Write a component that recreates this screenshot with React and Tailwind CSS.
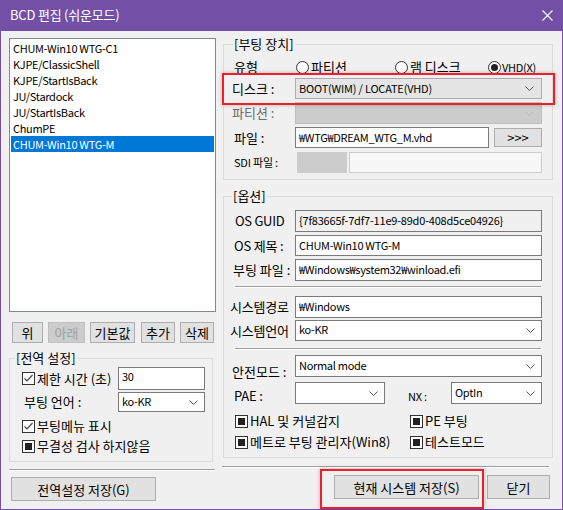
import React from 'react';

const entries = [
  'CHUM-Win10 WTG-C1',
  'KJPE/ClassicShell',
  'KJPE/StartIsBack',
  'JU/Stardock',
  'JU/StartIsBack',
  'ChumPE',
  'CHUM-Win10 WTG-M',
];

function Chevron({ color = '#555' }) {
  return (
    <svg width="9" height="5" viewBox="0 0 9 5" className="shrink-0">
      <polyline points="0.5,0.5 4.5,4.5 8.5,0.5" fill="none" stroke={color} strokeWidth="1" />
    </svg>
  );
}

function Btn({ children, className = '', disabled }) {
  return (
    <div
      className={`flex items-center justify-center border text-[13px] leading-none ${
        disabled ? 'border-[#bfbfbf] bg-[#cccccc] text-[#a0a0a0]' : 'border-[#adadad] bg-[#e1e1e1] text-black'
      } ${className}`}
    >
      {children}
    </div>
  );
}

function Combo({ value, className = '' }) {
  return (
    <div className={`flex items-center justify-between bg-white border border-[#7a7a7a] pl-[3px] pr-[6px] text-[11px] tracking-[-0.3px] ${className}`}>
      <span className="-mt-[2px]">{value}</span>
      <Chevron />
    </div>
  );
}

function Field({ value, className = '' }) {
  return (
    <div className={`flex items-center bg-white border border-[#7a7a7a] pl-[3px] text-[11px] tracking-[-0.3px] ${className}`}>
      <span className="-mt-[1px]">{value}</span>
    </div>
  );
}

function Check({ state }) {
  return (
    <span className="w-[13px] h-[13px] shrink-0 border border-[#333333] bg-white flex items-center justify-center">
      {state === 'checked' && (
        <svg width="11" height="11" viewBox="0 0 11 11">
          <polyline points="1.5,5.5 4,8 9.5,2" fill="none" stroke="#444" strokeWidth="1.2" />
        </svg>
      )}
      {state === 'mixed' && <span className="w-[7px] h-[7px] bg-[#222222]" />}
    </span>
  );
}

function Radio({ on }) {
  return (
    <span className="w-[13px] h-[13px] shrink-0 rounded-full border border-[#333333] bg-white flex items-center justify-center">
      {on && <span className="w-[7px] h-[7px] rounded-full bg-[#222222]" />}
    </span>
  );
}

function Separator({ className = '' }) {
  return <div className={`h-[2px] border-t border-[#a0a0a0] border-b border-b-white ${className}`} />;
}

function Label({ children, className = '' }) {
  return <span className={`w-[61px] shrink-0 text-[13px] whitespace-nowrap ${className}`}>{children}</span>;
}

export default function App() {
  return (
    <div className="relative w-[563px] h-[510px] bg-[#7350a6] flex flex-col px-px pb-px font-['Noto_Sans_CJK_KR','Noto_Sans',sans-serif] text-black">
      {/* title bar */}
      <div className="h-[31px] shrink-0 flex items-center justify-between pl-[9px] pr-[9px] text-white">
        <span className="text-[13px] tracking-[-0.2px] -mt-[1px]">BCD 편집 (쉬운모드)</span>
        <svg width="11" height="11" viewBox="0 0 11 11">
          <path d="M0.5 0.5 L10.5 10.5 M10.5 0.5 L0.5 10.5" stroke="#fff" strokeWidth="1.1" />
        </svg>
      </div>

      <div className="flex-1 bg-[#f0f0f0] flex">
        {/* left column */}
        <div className="w-[208px] ml-[8px] flex flex-col">
          <div className="mt-[7px] h-[274px] w-[207px] bg-white border border-[#828790] p-px pt-[1px] flex flex-col text-[11px] tracking-[-0.3px]">
            {entries.map((e, i) => (
              <div
                key={e}
                className={`h-[16px] shrink-0 pl-[2px] leading-[16px] whitespace-nowrap ${
                  i === entries.length - 1 ? 'bg-[#0078d7] text-white' : ''
                }`}
              >
                {e}
              </div>
            ))}
          </div>

          <div className="mt-[10px] h-[21px] flex pl-[3px]">
            <Btn className="w-[31px]">위</Btn>
            <Btn className="w-[37px] ml-[5px]" disabled>아래</Btn>
            <Btn className="w-[45px] ml-[5px]">기본값</Btn>
            <Btn className="w-[34px] ml-[6px]">추가</Btn>
            <Btn className="w-[34px] ml-[5px]">삭제</Btn>
          </div>

          <fieldset className="mt-[7px] w-[204px] border border-[#dcdcdc]">
            <legend className="ml-[5px] px-[1px] text-[13px] leading-[16px]">[전역 설정]</legend>
            <div className="pl-[12px] pb-[7px] flex flex-col">
              <div className="mt-[1px] h-[23px] flex items-center">
                <div className="w-[96px] flex items-center gap-[2px] text-[13px] whitespace-nowrap">
                  <Check state="checked" />
                  <span>제한 시간 (초)</span>
                </div>
                <Field value="30" className="w-[87px] h-[23px] items-start pt-[1px]" />
              </div>
              <div className="mt-[2px] h-[20px] flex items-center">
                <span className="w-[96px] text-[13px] pl-[2px]">부팅 언어 :</span>
                <Combo value="ko-KR" className="w-[87px] h-[20px]" />
              </div>
              <div className="mt-[6px] h-[16px] flex items-center gap-[2px] text-[13px]">
                <Check state="checked" />
                <span>부팅메뉴 표시</span>
              </div>
              <div className="mt-[4px] h-[16px] flex items-center gap-[2px] text-[13px]">
                <Check state="mixed" />
                <span>무결성 검사 하지않음</span>
              </div>
            </div>
          </fieldset>

          <Separator className="mt-[7px] w-[206px]" />
          <Btn className="mt-[6px] ml-[2px] w-[145px] h-[24px]">전역설정 저장(G)</Btn>
        </div>

        {/* right column */}
        <div className="w-[330px] ml-[6px] flex flex-col">
          <fieldset className="mt-[5px] w-[330px] border border-[#dcdcdc]">
            <legend className="ml-[9px] px-[1px] text-[13px] leading-[16px]">[부팅 장치]</legend>
            <div className="px-[10px] pb-[6px] flex flex-col">
              <div className="mt-[5px] h-[20px] flex items-center">
                <Label>유형</Label>
                <div className="w-[99px] ml-[1px] flex items-center gap-[2px] text-[13px]">
                  <Radio />
                  <span>파티션</span>
                </div>
                <div className="w-[93px] flex items-center gap-[2px] text-[13px]">
                  <Radio />
                  <span>램 디스크</span>
                </div>
                <div className="flex items-center gap-[1px] text-[11px] tracking-[-0.3px]">
                  <Radio on />
                  <span>VHD(X)</span>
                </div>
              </div>
              <div className="mt-[1px] h-[21px] flex items-center">
                <Label className="-ml-[2px] mr-[2px]">디스크 :</Label>
                <div className="w-[247px] h-[21px] flex items-center justify-between bg-[#e5e5e5] border border-[#adadad] pl-[3px] pr-[7px] text-[11px] tracking-[-0.2px]">
                  <span className="-mt-[1px]">BOOT(WIM) / LOCATE(VHD)</span>
                  <Chevron />
                </div>
              </div>
              <div className="mt-[3px] h-[22px] flex items-center">
                <Label className="-ml-[2px] mr-[2px] text-[#6d6d6d]">파티션 :</Label>
                <div className="w-[247px] h-[22px] flex items-center justify-end bg-[#cccccc] border border-[#bfbfbf] pr-[7px]">
                  <Chevron color="#bfbfbf" />
                </div>
              </div>
              <div className="mt-[3px] h-[21px] flex items-center">
                <Label>파일 :</Label>
                <Field value="₩WTG₩DREAM_WTG_M.vhd" className="w-[194px] h-[21px]" />
                <Btn className="ml-[5px] w-[48px] h-[19px] text-[12px]">&gt;&gt;&gt;</Btn>
              </div>
              <div className="mt-[4px] h-[21px] flex items-center">
                <span className="w-[63px] shrink-0 text-[11px] tracking-[-0.2px] whitespace-nowrap">SDI 파일 :</span>
                <div className="w-[50px] h-[21px] bg-[#cccccc] border border-[#cccccc]" />
                <div className="ml-[2px] w-[193px] h-[21px] bg-[#f7f7f7] border border-[#cccccc]" />
              </div>
            </div>
          </fieldset>

          <fieldset className="mt-[8px] w-[330px] border border-[#dcdcdc]">
            <legend className="ml-[8px] px-[1px] text-[13px] leading-[16px]">[옵션]</legend>
            <div className="px-[10px] pb-[7px] flex flex-col">
              <div className="mt-[6px] h-[22px] flex items-center">
                <Label className="text-[11px] tracking-[-0.3px] pl-[1px]">OS GUID</Label>
                <div className="w-[247px] h-[22px] flex items-start pt-[1px] bg-[#f0f0f0] border border-[#7a7a7a] pl-[3px] text-[11px] tracking-[-0.2px]">
                  {'{7f83665f-7df7-11e9-89d0-408d5ce04926}'}
                </div>
              </div>
              <div className="mt-[3px] h-[21px] flex items-center">
                <Label className="text-[11px] tracking-[-0.2px]">OS 제목 :</Label>
                <Field value="CHUM-Win10 WTG-M" className="w-[247px] h-[21px]" />
              </div>
              <div className="mt-[3px] h-[22px] flex items-center">
                <Label className="-ml-[1px] mr-[1px]">부팅 파일 :</Label>
                <Field value="₩Windows₩system32₩winload.efi" className="w-[247px] h-[22px]" />
              </div>
              <Separator className="mt-[5px] ml-[1px] w-[306px]" />
              <div className="mt-[8px] h-[22px] flex items-center">
                <Label className="-ml-[4px] mr-[4px] text-[13px] tracking-[-0.2px]">시스템경로</Label>
                <Field value="₩Windows" className="w-[247px] h-[22px]" />
              </div>
              <div className="mt-[2px] h-[21px] flex items-center">
                <Label className="-ml-[4px] mr-[4px] text-[13px] tracking-[-0.2px]">시스템언어</Label>
                <Combo value="ko-KR" className="w-[247px] h-[21px]" />
              </div>
              <Separator className="mt-[7px] ml-[1px] w-[306px]" />
              <div className="mt-[5px] h-[22px] flex items-center">
                <Label className="-ml-[2px] mr-[2px] self-end leading-[14px] -mb-[2px]">안전모드 :</Label>
                <Combo value="Normal mode" className="w-[247px] h-[22px]" />
              </div>
              <div className="mt-[5px] h-[22px] flex items-center">
                <Label className="text-[11px] tracking-[-0.2px] self-end leading-[14px] mb-[1px]">PAE :</Label>
                <Combo value="" className="w-[90px] h-[22px]" />
                <span className="ml-[23px] w-[43px] text-[11px] tracking-[-0.2px] self-end leading-[14px] mb-[1px]">NX :</span>
                <Combo value="OptIn" className="w-[91px] h-[22px]" />
              </div>
              <div className="mt-[9px] h-[16px] flex items-center text-[13px]">
                <div className="w-[175px] ml-[1px] flex items-center gap-[2px]">
                  <Check state="mixed" />
                  <span>HAL 및 커널감지</span>
                </div>
                <div className="flex items-center gap-[2px]">
                  <Check state="mixed" />
                  <span>PE 부팅</span>
                </div>
              </div>
              <div className="mt-[5px] h-[16px] flex items-center text-[13px]">
                <div className="w-[175px] ml-[1px] flex items-center gap-[2px] whitespace-nowrap">
                  <Check state="mixed" />
                  <span>메트로 부팅 관리자(Win8)</span>
                </div>
                <div className="flex items-center gap-[2px]">
                  <Check state="mixed" />
                  <span>테스트모드</span>
                </div>
              </div>
            </div>
          </fieldset>

          <Separator className="mt-[8px] -ml-[1px] w-[327px]" />
          <div className="mt-[7px] h-[24px] flex justify-end pr-[3px]">
            <Btn className="w-[145px] h-[24px]">현재 시스템 저장(S)</Btn>
            <Btn className="ml-[8px] w-[63px] h-[24px]">닫기</Btn>
          </div>
        </div>
      </div>

      {/* highlight annotations */}
      <div className="absolute left-[222px] top-[73px] w-[333px] h-[32px] border-2 border-[#f01e28] shadow-[0_0_4px_rgba(0,0,0,0.25)] pointer-events-none" />
      <div className="absolute left-[320px] top-[469px] w-[164px] h-[40px] border-2 border-[#f01e28] shadow-[0_0_4px_rgba(0,0,0,0.25)] pointer-events-none" />
    </div>
  );
}
